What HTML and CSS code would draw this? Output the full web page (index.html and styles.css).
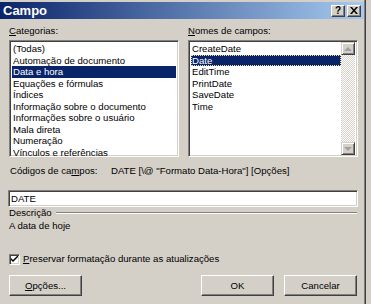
FILE: index.html
```html
<!DOCTYPE html>
<html lang="pt">
    <head>
        <meta charset="UTF-8" />
        <title>Campo</title>
        <link rel="stylesheet" href="styles.css">
    </head>
    <body>
        <div class="window">
            <div class="titlebar">
                <span class="title">Campo</span>
                <div class="title-buttons">
                    <span class="tbtn">?</span>
                    <span class="tbtn close">
                        <svg width="8" height="7" viewBox="0 0 8 7"><path d="M0 0h2l2 2.5L6 0h2L5 3.5 8 7H6L4 4.5 2 7H0l3-3.5z" fill="#000"/></svg>
                    </span>
                </div>
            </div>

            <div class="content">
                <div class="columns">
                    <div class="column">
                        <div class="label"><u>C</u>ategorias:</div>
                        <ul class="listbox">
                            <li>(Todas)</li>
                            <li>Automação de documento</li>
                            <li class="selected">Data e hora</li>
                            <li>Equações e fórmulas</li>
                            <li>Índices</li>
                            <li>Informação sobre o documento</li>
                            <li>Informações sobre o usuário</li>
                            <li>Mala direta</li>
                            <li>Numeração</li>
                            <li>Vínculos e referências</li>
                        </ul>
                    </div>
                    <div class="column">
                        <div class="label"><u>N</u>omes de campos:</div>
                        <div class="listbox with-scroll">
                            <ul class="items">
                                <li>CreateDate</li>
                                <li class="selected focused">Date</li>
                                <li>EditTime</li>
                                <li>PrintDate</li>
                                <li>SaveDate</li>
                                <li>Time</li>
                            </ul>
                            <div class="scrollbar">
                                <span class="sbtn"><span class="arrow up"></span></span>
                                <span class="track"></span>
                                <span class="sbtn"><span class="arrow down"></span></span>
                            </div>
                        </div>
                    </div>
                </div>

                <div class="codes">
                    <span class="codes-label">Códigos de ca<u>m</u>pos:</span>
                    <span class="codes-value">DATE [\@ "Formato Data-Hora"] [Opções]</span>
                </div>

                <div class="field">DATE</div>

                <div class="group-title">
                    <span>Descrição</span>
                    <span class="rule"></span>
                </div>
                <div class="description">A data de hoje</div>

                <label class="check">
                    <span class="checkbox">
                        <svg width="7" height="7" viewBox="0 0 7 7"><path d="M0 2l2 2 5-5v2L2 6 0 4z" fill="#000"/></svg>
                    </span>
                    <span><u>P</u>reservar formatação durante as atualizações</span>
                </label>

                <div class="buttons">
                    <span class="button"><u>O</u>pções...</span>
                    <span class="spacer"></span>
                    <span class="button">OK</span>
                    <span class="button">Cancelar</span>
                </div>
            </div>
        </div>
    </body>
</html>
```

FILE: styles.css
```css
body {
    margin: 0;
    background-color: #d4d0c8;
    font-family: "Liberation Sans", Arial, sans-serif;
    font-size: 9.6px;
    color: #000;
}

.window {
    width: 366px;
    height: 304px;
    padding-top: 2px;
    box-sizing: border-box;
    background-color: #d4d0c8;
    border-right: 1px solid #404040;
    box-shadow: inset -1px 0 #808080;
    margin-right: 4px;
    position: relative;
}

.titlebar {
    height: 17px;
    margin-right: 1px;
    display: flex;
    align-items: center;
    justify-content: space-between;
    background: linear-gradient(to right, #0a246a, #a6caf0);
    color: #fff;
}

.title {
    font-weight: bold;
    font-size: 13px;
    padding-left: 3px;
}

.title-buttons {
    display: flex;
    gap: 2px;
    padding-right: 3px;
}

.tbtn {
    width: 14px;
    height: 12px;
    box-sizing: border-box;
    display: flex;
    align-items: center;
    justify-content: center;
    background-color: #d4d0c8;
    color: #000;
    font-weight: bold;
    font-size: 10px;
    border: 1px solid;
    border-color: #fff #404040 #404040 #fff;
    box-shadow: inset -1px -1px #808080;
}

.content {
    padding: 6px 8px 0 9px;
}

.columns {
    display: grid;
    grid-template-columns: 170px 170px;
    column-gap: 9px;
}

.label {
    line-height: 12px;
    height: 12px;
    margin-bottom: 3px;
}

.listbox {
    list-style: none;
    margin: 0;
    padding: 2px 2px;
    height: 117px;
    box-sizing: border-box;
    background-color: #fff;
    border: 1px solid;
    border-color: #808080 #fff #fff #808080;
    box-shadow: inset 1px 1px #404040, inset -1px -1px #d4d0c8;
}

.listbox li {
    line-height: 11.5px;
    height: 11.5px;
    padding-left: 1px;
    white-space: nowrap;
}

.listbox li.selected {
    background-color: #0a246a;
    color: #fff;
}

.listbox li.focused {
    outline: 1px dotted #f0e090;
    outline-offset: -1px;
}

.with-scroll {
    display: flex;
    padding-right: 2px;
}

.items {
    list-style: none;
    margin: 0;
    padding: 0;
    flex: 1;
}

.scrollbar {
    width: 14px;
    margin-top: -1px;
    margin-bottom: -1px;
    display: flex;
    flex-direction: column;
}

.track {
    flex: 1;
    background-image: repeating-conic-gradient(#d4d0c8 0 25%, #fff 0 50%);
    background-size: 2px 2px;
}

.sbtn {
    height: 13px;
    box-sizing: border-box;
    display: flex;
    align-items: center;
    justify-content: center;
    background-color: #d4d0c8;
    border: 1px solid;
    border-color: #d4d0c8 #404040 #404040 #d4d0c8;
    box-shadow: inset 1px 1px #fff, inset -1px -1px #808080;
}

.arrow {
    width: 0;
    height: 0;
    border-left: 4px solid transparent;
    border-right: 4px solid transparent;
}

.arrow.up {
    border-bottom: 4px solid #a0a0a0;
}

.arrow.down {
    border-top: 4px solid #a0a0a0;
}

.codes {
    display: flex;
    margin-top: 8px;
    line-height: 12px;
}

.codes-label {
    width: 101px;
    padding-left: 1px;
}

.field {
    margin-top: 13px;
    height: 17px;
    line-height: 15px;
    padding-left: 2px;
    box-sizing: border-box;
    width: 350px;
    margin-left: -1px;
    background-color: #fff;
    border: 1px solid;
    border-color: #808080 #fff #fff #808080;
    box-shadow: inset 1px 1px #404040, inset -1px -1px #d4d0c8;
}

.group-title {
    display: flex;
    align-items: center;
    gap: 4px;
    line-height: 12px;
}

.rule {
    flex: 1;
    height: 0;
    border-top: 1px solid #808080;
    border-bottom: 1px solid #fff;
}

.description {
    line-height: 12px;
    margin-top: 1px;
}

.check {
    display: flex;
    align-items: center;
    gap: 3px;
    margin-top: 21px;
    line-height: 12px;
}

.checkbox {
    width: 11px;
    height: 11px;
    box-sizing: border-box;
    display: flex;
    align-items: center;
    justify-content: center;
    background-color: #fff;
    border: 1px solid;
    border-color: #808080 #fff #fff #808080;
    box-shadow: inset 1px 1px #404040, inset -1px -1px #d4d0c8;
}

.buttons {
    display: flex;
    gap: 10px;
    margin-top: 10px;
}

.spacer {
    flex: 1;
}

.button {
    width: 73px;
    height: 21px;
    box-sizing: border-box;
    display: flex;
    align-items: center;
    justify-content: center;
    border: 1px solid;
    border-color: #fff #404040 #404040 #fff;
    box-shadow: inset -1px -1px #808080, inset 1px 1px #d4d0c8;
}
```
